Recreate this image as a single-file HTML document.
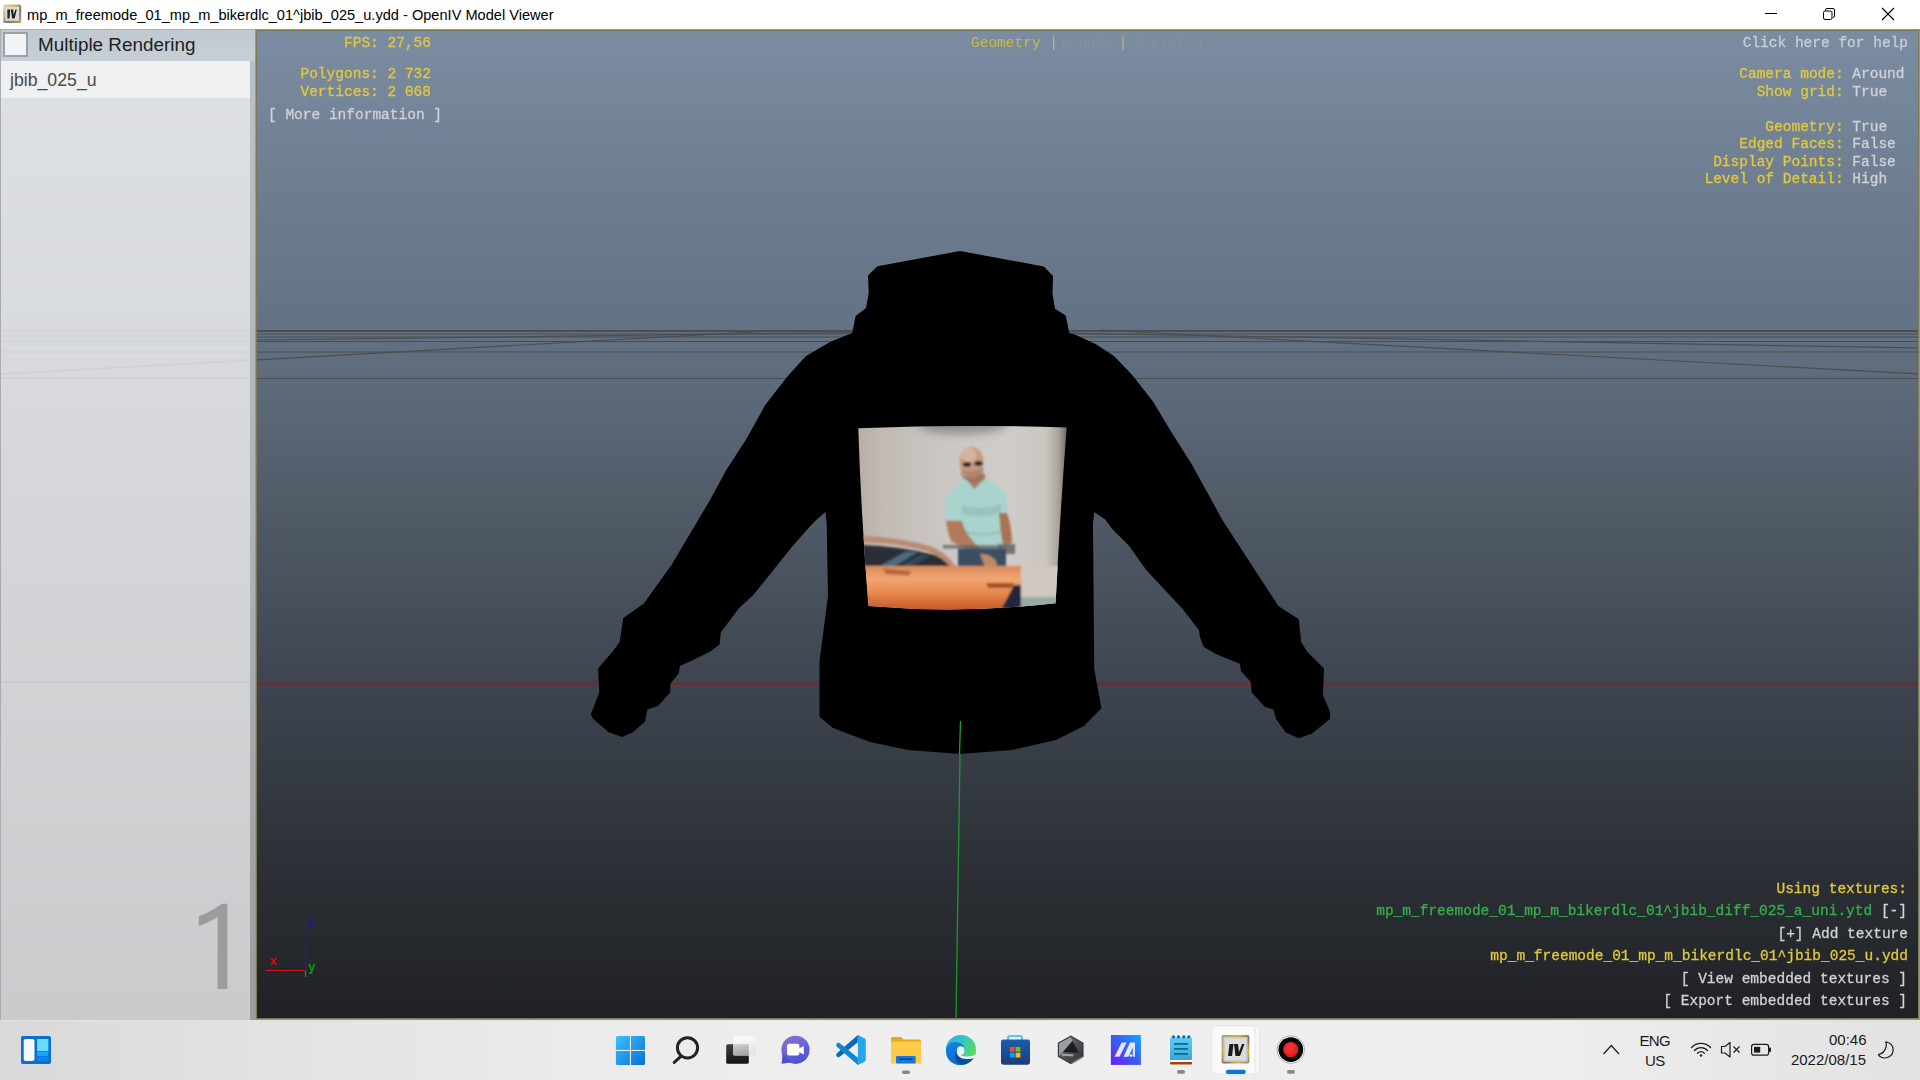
<!DOCTYPE html>
<html><head><meta charset="utf-8">
<style>
*{margin:0;padding:0;box-sizing:border-box}
html,body{width:1920px;height:1080px;overflow:hidden;background:#fff;font-family:"Liberation Sans",sans-serif}
.abs{position:absolute}
#title{left:0;top:0;width:1920px;height:29px;background:#fff}
#title .t{left:27px;top:6.5px;font-size:14.6px;color:#000;white-space:pre;line-height:17px}
#panel{left:0;top:29px;width:255px;height:991px;background:linear-gradient(#dfe2e5,#d6d8db 40%,#cacbcd)}
#hdr{left:0;top:0;width:255px;height:32px;background:linear-gradient(#c0c8d0,#c6ced6)}
#chk{left:3px;top:3px;width:25px;height:25px;border:2px solid #9aa3ad;background:#f1f3f5}
#mr{left:38px;top:5px;font-size:18.9px;color:#1e1e1e;line-height:22px;white-space:pre}
#item{left:1px;top:32px;width:249px;height:37px;background:#eef0f2}
#item span{position:absolute;left:9px;top:8px;font-size:17.7px;color:#4a4a4a;line-height:22px}
#strip{left:250px;top:32px;width:5px;height:959px;background:linear-gradient(#b9c0c7,#aeb2b6 50%,#9c9c9c);z-index:1}
#lborder{left:0;top:0;width:1px;height:991px;background:#a8acb0;z-index:2}
#ptop{left:0;top:0;width:255px;height:1px;background:#a9b1b9;z-index:2}
#big1{left:190px;top:868px;font-size:120px;color:#a3a3a3;line-height:140px}
#vp{left:255px;top:29px;width:1665px;height:991px;border:1px solid #a89f3e;box-shadow:inset 0 0 0 1px #7c7a50;background:linear-gradient(#7b8da3 0%,#6e7d90 16%,#637284 30%,#4f5965 50%,#3e4550 66%,#2c3036 85%,#1f2125 100%)}
#taskbar{left:0;top:1020px;width:1920px;height:60px;background:linear-gradient(90deg,#d9d9d9 0%,#e3e3e3 15%,#ebebeb 30%,#efefef 50%,#eeeeee 80%,#e2e2e2 100%);border-top:1px solid #e2e2e2}
#scene{left:0;top:0}
.mono{font-family:"Liberation Mono",monospace;font-size:14.5px}
.y{fill:#e2c93c;stroke:#e2c93c;stroke-width:0.3px}
.gr{fill:#d0d2d4;stroke:#d0d2d4;stroke-width:0.3px}
.gn{fill:#34b04a;stroke:#34b04a;stroke-width:0.3px}
.tray{font-size:15px;color:#1a1a1a;line-height:18px;white-space:pre}
</style></head><body>
<div id="title" class="abs">
  <svg class="abs" style="left:0;top:0" width="26" height="29" viewBox="0 0 26 29">
    <defs><linearGradient id="icb" x1="0" y1="0" x2="1" y2="1"><stop offset="0" stop-color="#d8d8d8"/><stop offset="0.35" stop-color="#d8b848"/><stop offset="0.6" stop-color="#7a7a7a"/><stop offset="1" stop-color="#c8a848"/></linearGradient></defs>
    <rect x="3.2" y="4.5" width="18" height="18.6" rx="1.5" fill="url(#icb)"/>
    <rect x="5.4" y="6.8" width="13.6" height="14" fill="#dcdcdf"/>
    <path d="M7.4,9.4 L10.2,9.4 L9.6,18.5 L7.4,18.5 Z" fill="#262626"/>
    <path d="M10.8,9.4 L13.2,9.4 L13.6,15 L15.4,9.4 L16.8,9.4 L14.6,18.5 L12.2,18.5 Z" fill="#1e1e1e"/>
  </svg>
  <div class="abs t">mp_m_freemode_01_mp_m_bikerdlc_01^jbib_025_u.ydd - OpenIV Model Viewer</div>
  <svg class="abs" style="left:1750px;top:0" width="170" height="29" viewBox="1750 0 170 29">
    <line x1="1765" y1="13.5" x2="1777" y2="13.5" stroke="#000" stroke-width="1"/>
    <rect x="1823.5" y="11" width="8.5" height="8.5" rx="1.5" fill="none" stroke="#000" stroke-width="1"/>
    <path d="M1825.5,10.5 V10 Q1825.5,8.5 1827,8.5 H1833 Q1834.5,8.5 1834.5,10 V16 Q1834.5,17.5 1833,17.5" fill="none" stroke="#000" stroke-width="1"/>
    <path d="M1882 8 L1894 20 M1894 8 L1882 20" stroke="#000" stroke-width="1.1"/>
  </svg>
</div>
<div id="panel" class="abs">
  <div id="lborder" class="abs"></div>
  <div id="ptop" class="abs"></div>
  <div id="hdr" class="abs"></div>
  <div id="chk" class="abs"></div>
  <div id="mr" class="abs">Multiple Rendering</div>
  <div id="item" class="abs"><span>jbib_025_u</span></div>
  <div id="strip" class="abs"></div>
  
</div>
<div id="vp" class="abs"></div>

<svg id="scene" class="abs" width="1920" height="1080" viewBox="0 0 1920 1080">
  <defs>
    <clipPath id="vpclip"><rect x="257" y="31" width="1661" height="988"/></clipPath>
    <clipPath id="photoclip"><path d="M858.3,428.3 Q962,424 1066.7,427.4 Q1060,515 1055.6,603.3 Q962,614 868.5,606 Q861,515 858.3,428.3 Z"/></clipPath>
    <linearGradient id="pbg" gradientUnits="userSpaceOnUse" x1="858" y1="0" x2="1067" y2="0">
      <stop offset="0" stop-color="#b8aea6"/>
      <stop offset="0.12" stop-color="#c2bab4"/>
      <stop offset="0.4" stop-color="#cac7c3"/>
      <stop offset="0.7" stop-color="#d0cdc9"/>
      <stop offset="0.9" stop-color="#cbc6c0"/>
      <stop offset="0.96" stop-color="#aaa29a"/>
      <stop offset="1" stop-color="#6e645c"/>
    </linearGradient>
    <radialGradient id="pshade" gradientUnits="userSpaceOnUse" cx="962" cy="420" r="50" fx="962" fy="420">
      <stop offset="0" stop-color="#3a3634" stop-opacity="0.7"/>
      <stop offset="1" stop-color="#3a3634" stop-opacity="0"/>
    </radialGradient>
    <linearGradient id="carg" gradientUnits="userSpaceOnUse" x1="0" y1="566" x2="0" y2="610">
      <stop offset="0" stop-color="#d98a5c"/>
      <stop offset="0.3" stop-color="#f2a472"/>
      <stop offset="0.6" stop-color="#e88a4e"/>
      <stop offset="1" stop-color="#c4582a"/>
    </linearGradient>
    <filter id="blur4" x="-50%" y="-100%" width="200%" height="300%"><feGaussianBlur stdDeviation="4"/></filter>
    <filter id="soft" x="-5%" y="-5%" width="110%" height="110%"><feGaussianBlur stdDeviation="0.8"/></filter>
  </defs>
  <g clip-path="url(#vpclip)" fill="none" stroke="#4a4a4a" stroke-width="1.2" opacity="0.9">
    <line x1="255" y1="331" x2="1920" y2="331" stroke-width="2"/>
    <line x1="255" y1="334" x2="1920" y2="334"/>
    <line x1="255" y1="337" x2="1920" y2="337"/>
    <line x1="255" y1="341.5" x2="1920" y2="341.5"/>
    <line x1="255" y1="352" x2="1920" y2="352"/>
    <line x1="255" y1="378.5" x2="1920" y2="378.5"/>
    <line x1="255" y1="360" x2="770" y2="331"/>
    <line x1="1100" y1="330" x2="1920" y2="374"/>
    <line x1="255" y1="340" x2="900" y2="332"/>
    <line x1="1000" y1="332" x2="1920" y2="348"/>
    <line x1="255" y1="683.6" x2="1920" y2="684" stroke="#74282e" stroke-width="2.4"/>
    <line x1="960.5" y1="720" x2="956" y2="1020" stroke="#22a02a" stroke-width="1.3"/>
  </g>
  <path d="M960,251 L1043.75,266.5 L1053,276 L1052.5,293.75 L1055,308.75 L1065.6,315.6 L1069.4,333 L1075.2,334.8 L1095.6,344 L1114,356 L1132.6,375.6 L1153,401.5 L1169.6,429.3 L1191.9,464.4 L1222.4,520 L1278.3,606 L1298.8,619.2 L1301.2,642 L1307.2,651.7 L1324,668.5 L1322.9,695 L1330,711.8 L1330,719 L1312,733.5 L1298.8,738.3 L1285.5,732.3 L1276,719 L1273.5,709.4 L1265,707 L1251.8,692.6 L1250.6,681.8 L1241,671 L1239.8,663.7 L1215.7,654 L1203.7,646.8 L1200,637.2 L1198.9,630 L1182,608.3 L1146,569.8 L1129,545.7 L1112.2,528.9 L1105,519.3 L1094.2,512 L1093,524 L1094.2,668.5 L1101.4,708.2 L1084,726 L1056,740 L1012,750 L960,754 L908,750 L870,742 L833,728 L819.5,716.7 L819.5,661.3 L828,596 L826.7,524 L825.5,512 L817,519.3 L809.9,526.5 L791.8,547 L753.3,595 L738.9,608.3 L720.8,632.4 L719.6,644.4 L710,651.7 L693.1,660 L680,666 L678.7,673.3 L670.3,684 L670.3,692.6 L658.2,705.8 L647.4,709.4 L645,721.5 L633,732.3 L622,737 L608.9,732.3 L593.2,719 L590.8,714.3 L599.3,692.6 L598,668.5 L612.5,651.7 L619.7,642 L623.3,618 L643.8,603.5 L671.5,565 L710,500 L726.3,470 L746.7,438.5 L765.2,405 L787.4,376.5 L806,356 L830,342 L852.2,333 L855.6,316 L866,308 L868.75,292.5 L868,275.6 L877.5,266.25 Z" fill="#000"/>
  <line x1="960.5" y1="721" x2="959.5" y2="754" stroke="#22a02a" stroke-width="1.3"/>

  <!-- photo -->
  <g clip-path="url(#photoclip)">
    <rect x="850" y="420" width="225" height="200" fill="url(#pbg)"/>
    <ellipse cx="962" cy="424" rx="45" ry="10" fill="#4a4644" opacity="0.45" filter="url(#blur4)"/>
    <g filter="url(#soft)">
      <!-- floor right -->
      <rect x="1019" y="566" width="50" height="45" fill="#cfc8c0"/>
      <rect x="1019" y="597" width="50" height="16" fill="#98aaa2"/>
      <!-- neck + head -->
      <path d="M965,474 L985,474 L986,490 L964,490 Z" fill="#a87c62"/>
      <ellipse cx="971.5" cy="462" rx="12" ry="15" fill="#c49a80"/>
      <ellipse cx="969" cy="455" rx="8" ry="7" fill="#d6b298"/>
      <path d="M961,468 Q962,479 972,480 Q982,479 983.5,467 L983,474 Q979,482 972,482 Q964,482 961,474 Z" fill="#8e6a56" opacity="0.8"/>
      <path d="M962,469 Q971,474 983,467 L983,473 Q972,480 963,474 Z" fill="#a57a62" opacity="0.6"/>
      <ellipse cx="967" cy="464.5" rx="4.2" ry="2.4" fill="#2e2826"/>
      <ellipse cx="978.5" cy="463.5" rx="4.2" ry="2.4" fill="#2e2826"/>
      <!-- shirt -->
      <path d="M966,479 L974,489 L986,478 Q998,486 1005,492 Q1008,502 1007,513 L1001,514 L1004,550 L961,550 L962,521 L945.5,520.5 Q944,506 946,497 Q956,486 966,479 Z" fill="#a9d3cd"/>
      <path d="M962,505 Q982,512 1001,503 L1001,512 Q982,520 962,514 Z" fill="#8fb6b2" opacity="0.55"/>
      <path d="M963,530 Q982,536 1002,530 L1002,533 Q982,539 963,533 Z" fill="#8fb6b2" opacity="0.5"/>
      <!-- arms -->
      <path d="M946,520.5 L962,521 Q964,531 973,541 L982,550 L988,558 L996,568 L986,570 L979,554 Q962,548 951,541 Q947,531 946,520.5 Z" fill="#b27a5a"/>
      <path d="M999,513 L1007,513 Q1012,528 1012,543 L1003,545 Q1000,530 999,513 Z" fill="#a87255"/>
      <!-- dark bar -->
      <rect x="943" y="545" width="58" height="3.5" fill="#5e6266" opacity="0.75"/>
      <rect x="998" y="544" width="17" height="10" fill="#606466" opacity="0.85"/>
      <!-- jeans -->
      <path d="M958,548.5 L1006,548.5 L1006,567 L958,567 Z" fill="#3c4e64"/>
      <!-- hand -->
      <path d="M980,554 Q990,553 996,561 L998,570 L986,570 Z" fill="#bb8a6c"/>
      <!-- car roof/window -->
      <path d="M860,545 Q900,546 935,555 Q948,560 952,567 L860,567 Z" fill="#2a2f36"/>
      <path d="M880,566 L905,552 L918,552 L895,566 Z" fill="#5a86a2" opacity="0.7"/>
      <path d="M900,566 L922,554 L930,556 L912,566 Z" fill="#3a5a72" opacity="0.6"/>
      <path d="M860,536 Q900,537 933,547 Q950,556 956,567 L950,567 Q945,559 929,552 Q895,542 860,542 Z" fill="#b88c72"/>
      <!-- car body -->
      <path d="M860,566 L1021,566 L1021,615 L860,615 Z" fill="url(#carg)"/>
      <path d="M1014,585 L1000,612 L1021,612 L1021,585 Z" fill="#22283a"/>
      <path d="M986,583 L1014,583 L1012,588 L988,588 Z" fill="#a85028"/>
      <path d="M883,568.5 L911,571 L909,575.5 L886,574 Z" fill="#a85a34" opacity="0.8"/>
    </g>
  </g>

  <path d="M217.6,989 L227.3,989 L227.3,903.7 L222,903.7 Q212,911 198.7,916.5 L198.7,926.2 Q210,922 217.6,917 Z" fill="#9c9c9c"/>
  <g opacity="0.06" stroke="#5a5048" stroke-width="1.5" fill="none">
    <line x1="0" y1="331" x2="255" y2="331"/><line x1="0" y1="336" x2="255" y2="336"/><line x1="0" y1="341" x2="255" y2="341"/><line x1="0" y1="352" x2="255" y2="352"/><line x1="0" y1="378" x2="255" y2="378"/><line x1="0" y1="374" x2="255" y2="360"/>
    <line x1="0" y1="682" x2="255" y2="682" stroke="#c03030"/>
  </g>
  <!-- axis gizmo -->
  <g>
    <line x1="266" y1="970.5" x2="305" y2="970.5" stroke="#d01818" stroke-width="1.2"/>
    <line x1="305.5" y1="932" x2="305.5" y2="971" stroke="#1818d8" stroke-width="1.2"/>
    <line x1="305.5" y1="971" x2="305.5" y2="977" stroke="#18a018" stroke-width="1.2"/>
    <text x="270.2" y="965" font-family="Liberation Sans" font-weight="bold" font-size="12.5" fill="#d01212">x</text>
    <text x="308.3" y="926.4" font-family="Liberation Sans" font-weight="bold" font-size="12.5" fill="#1212d0">z</text>
    <text x="308.3" y="971" font-family="Liberation Sans" font-weight="bold" font-size="12.5" fill="#12a012">y</text>
  </g>

  <!-- viewport texts -->
  <g class="mono">
    <text x="431" y="47" text-anchor="end" class="y">FPS: 27,56</text>
    <text x="431" y="78" text-anchor="end" class="y">Polygons: 2 732</text>
    <text x="431" y="95.6" text-anchor="end" class="y">Vertices: 2 068</text>
    <text x="268" y="119" class="gr">[ More information ]</text>
    <text x="971" y="47" fill="#cbb943">Geometry</text>
    <text x="1053.5" y="47" text-anchor="middle" fill="#cbb943">|</text>
    <text x="1061" y="47" fill="#87909a">Bounds</text>
    <text x="1123" y="47" text-anchor="middle" fill="#cbb943">|</text>
    <text x="1133" y="47" fill="#87909a">Skeleton</text>
    <text x="1908" y="47" text-anchor="end" fill="#c9ced4" stroke="#c9ced4" stroke-width="0.3">Click here for help</text>
    <text x="1843.7" y="78.3" text-anchor="end" class="y">Camera mode:</text>
    <text x="1852.3" y="78.3" class="gr">Around</text>
    <text x="1843.7" y="95.8" text-anchor="end" class="y">Show grid:</text>
    <text x="1852.3" y="95.8" class="gr">True</text>
    <text x="1843.7" y="131" text-anchor="end" class="y">Geometry:</text>
    <text x="1852.3" y="131" class="gr">True</text>
    <text x="1843.7" y="148.2" text-anchor="end" class="y">Edged Faces:</text>
    <text x="1852.3" y="148.2" class="gr">False</text>
    <text x="1843.7" y="165.7" text-anchor="end" class="y">Display Points:</text>
    <text x="1852.3" y="165.7" class="gr">False</text>
    <text x="1843.7" y="183" text-anchor="end" class="y">Level of Detail:</text>
    <text x="1852.3" y="183" class="gr">High</text>

    <text x="1907" y="893" text-anchor="end" class="y">Using textures:</text>
    <text x="1907" y="915" text-anchor="end"><tspan class="gn">mp_m_freemode_01_mp_m_bikerdlc_01^jbib_diff_025_a_uni.ytd</tspan><tspan class="gr"> [-]</tspan></text>
    <text x="1908" y="938" text-anchor="end" class="gr">[+] Add texture</text>
    <text x="1908" y="960" text-anchor="end" class="y">mp_m_freemode_01_mp_m_bikerdlc_01^jbib_025_u.ydd</text>
    <text x="1907" y="982.5" text-anchor="end" class="gr">[ View embedded textures ]</text>
    <text x="1907" y="1005" text-anchor="end" class="gr">[ Export embedded textures ]</text>
  </g>
</svg>

<div id="taskbar" class="abs"></div>
<svg class="abs" style="left:0;top:1020px" width="1920" height="60" viewBox="0 1020 1920 60">
  <defs>
    <linearGradient id="winb" gradientUnits="userSpaceOnUse" x1="616" y1="1036" x2="645" y2="1065"><stop offset="0" stop-color="#3cc0fa"/><stop offset="1" stop-color="#0870d8"/></linearGradient>
    <linearGradient id="chatg" x1="0.2" y1="0" x2="0.6" y2="1"><stop offset="0" stop-color="#8a6ccc"/><stop offset="0.4" stop-color="#7068d8"/><stop offset="1" stop-color="#4a50d4"/></linearGradient>
    <linearGradient id="vsg" x1="0" y1="0" x2="1" y2="0"><stop offset="0" stop-color="#0a6ab8"/><stop offset="1" stop-color="#1ea0ec"/></linearGradient>
    <linearGradient id="edg1" x1="0" y1="0.1" x2="1" y2="0.6"><stop offset="0" stop-color="#24b0f0"/><stop offset="0.5" stop-color="#36c4c0"/><stop offset="1" stop-color="#5ee050"/></linearGradient>
    <linearGradient id="edg2" x1="0" y1="0" x2="0.3" y2="1"><stop offset="0" stop-color="#1482dc"/><stop offset="1" stop-color="#0a6ad0"/></linearGradient>
    <linearGradient id="storeg" x1="0" y1="0" x2="0" y2="1"><stop offset="0" stop-color="#1a5eb0"/><stop offset="1" stop-color="#203a78"/></linearGradient>
    <linearGradient id="iag" x1="1" y1="0" x2="0" y2="1"><stop offset="0" stop-color="#0aa8ff"/><stop offset="0.5" stop-color="#3a5cf4"/><stop offset="1" stop-color="#6a1cf0"/></linearGradient>
    <linearGradient id="npg" x1="0" y1="0" x2="0" y2="1"><stop offset="0" stop-color="#60ccf2"/><stop offset="1" stop-color="#3aa6d8"/></linearGradient>
    <linearGradient id="hexg" x1="0" y1="0" x2="1" y2="1"><stop offset="0" stop-color="#7a8088"/><stop offset="0.5" stop-color="#50545a"/><stop offset="1" stop-color="#2e3034"/></linearGradient>
    <linearGradient id="ivb" x1="0" y1="0" x2="1" y2="1"><stop offset="0" stop-color="#9a9a9a"/><stop offset="0.3" stop-color="#d8b030"/><stop offset="0.55" stop-color="#707070"/><stop offset="0.8" stop-color="#e0b830"/><stop offset="1" stop-color="#8a8a8a"/></linearGradient>
    <linearGradient id="tvd" x1="0" y1="0" x2="0" y2="1"><stop offset="0" stop-color="#404040"/><stop offset="1" stop-color="#111"/></linearGradient>
    <linearGradient id="tvl" x1="0" y1="0" x2="0.3" y2="1"><stop offset="0" stop-color="#ffffff"/><stop offset="1" stop-color="#e4e4e4"/></linearGradient>
    <linearGradient id="tvo" x1="0" y1="0" x2="0.3" y2="1"><stop offset="0" stop-color="#d0d0d0"/><stop offset="1" stop-color="#a8a8a8"/></linearGradient>
    <radialGradient id="redg" cx="0.45" cy="0.4" r="0.6"><stop offset="0" stop-color="#ff3a3a"/><stop offset="1" stop-color="#d81a1a"/></radialGradient>
  </defs>
  <!-- widgets -->
  <rect x="21" y="1036" width="30" height="28" rx="1.8" fill="#0b6fd0"/>
  <rect x="23.7" y="1039" width="10.8" height="22" rx="2" fill="#f8f8f8"/>
  <rect x="37.1" y="1039" width="11.3" height="12" fill="#6adcff"/>
  <rect x="37.1" y="1051.6" width="11.3" height="4.3" fill="#1aa8f8"/>
  <rect x="37.1" y="1056.6" width="11.3" height="4.5" fill="#0a86e6"/>
  <!-- start -->
  <rect x="615.9" y="1035.9" width="29.1" height="29.1" rx="1.6" fill="url(#winb)"/>
  <rect x="629.9" y="1035" width="1.1" height="31" fill="#eeeeee"/>
  <rect x="615" y="1049.9" width="31" height="1.1" fill="#eeeeee"/>
  <!-- search -->
  <circle cx="687.5" cy="1047.8" r="10.1" fill="none" stroke="#222" stroke-width="3"/>
  <line x1="680.6" y1="1056.6" x2="674.3" y2="1062.4" stroke="#222" stroke-width="3" stroke-linecap="round"/>
  <!-- task view -->
  <rect x="726.2" y="1044.2" width="22.6" height="19.6" rx="1.6" fill="url(#tvd)"/>
  <rect x="733.3" y="1036.2" width="22.5" height="19.2" rx="1.4" fill="url(#tvl)"/>
  <rect x="733.3" y="1044.2" width="15.5" height="11.2" fill="url(#tvo)"/>
  <!-- chat -->
  <circle cx="795.5" cy="1049.8" r="14.1" fill="url(#chatg)"/>
  <path d="M781.6,1063.8 L782.6,1053.5 L791,1062.5 Z" fill="#4e4ed4"/>
  <rect x="787" y="1043.8" width="12.4" height="11.6" rx="2" fill="#fff"/>
  <path d="M799,1048.5 L803.8,1046 L803.8,1054.6 L799,1052 Z" fill="#fff"/>
  <!-- vscode -->
  <path d="M857.9,1035 L857.9,1042.3 L839.8,1056.8 Q837.5,1058 836.3,1055.8 Q835.8,1054 837.2,1053 Z" fill="#0b6bb6"/>
  <path d="M857.9,1065 L857.9,1057.7 L839.8,1043.2 Q837.5,1042 836.3,1044.2 Q835.8,1046 837.2,1047 Z" fill="#0e86d2"/>
  <path d="M857.9,1035 L864.5,1038.2 Q865.8,1039 865.8,1040.5 L865.8,1059.5 Q865.8,1061 864.5,1061.8 L857.9,1065 Z" fill="#22a6ee"/>
  <!-- explorer -->
  <path d="M891,1038.5 Q891,1037 892.5,1037 L901,1037 L903.5,1039.5 L919.5,1039.5 Q921,1039.5 921,1041 L921,1063.2 L891,1063.2 Z" fill="#e8a818"/>
  <rect x="891" y="1041.5" width="30" height="21.7" rx="1" fill="#fccc48"/>
  <rect x="896" y="1056" width="19.7" height="7.5" rx="1.2" fill="#1a78d8"/>
  <rect x="899" y="1058.5" width="13.5" height="1.4" fill="#0a3a80"/>
  <rect x="902" y="1070.5" width="8" height="3.4" rx="1.7" fill="#888"/>
  <!-- edge -->
  <circle cx="961" cy="1050" r="15.1" fill="url(#edg1)"/>
  <path d="M945.9,1050 Q947,1042 956,1042 Q962,1042.5 964.5,1047 L958,1048 Q955,1052 959,1056 Q964,1059 972,1057.5 Q974,1057 973.5,1058.3 Q968,1065.2 959,1065.1 Q946,1063 945.9,1050 Z" fill="url(#edg2)"/>
  <path d="M955.5,1052 Q954,1060 960,1064.6 Q968,1065.5 973.8,1058 Q965,1060.5 960,1057.5 Q956.5,1055 955.5,1052 Z" fill="#0e4c9e"/>
  <ellipse cx="960.6" cy="1050.6" rx="3.7" ry="4.4" fill="#efefef"/>
  <path d="M957.5,1052 Q961,1056.5 966,1056.6 Q972,1056.8 976.6,1054.2 L977,1057 L973.8,1058.2 Q966,1060 961,1058 Q957,1055.5 956.8,1052 Z" fill="#efefef"/>
  <!-- store -->
  <path d="M1008,1041 L1008,1037.5 Q1008,1036 1009.5,1036 L1020.5,1036 Q1022,1036 1022,1037.5 L1022,1041" fill="none" stroke="#3ab4f2" stroke-width="1.6"/>
  <path d="M1001,1041.5 Q1001,1039.6 1003,1039.6 L1028,1039.6 Q1030,1039.6 1030,1041.5 L1030,1062 Q1030,1064.7 1027,1064.7 L1004,1064.7 Q1001,1064.7 1001,1062 Z" fill="url(#storeg)"/>
  <rect x="1009.8" y="1046.9" width="4.8" height="4.8" fill="#f25022"/>
  <rect x="1015.6" y="1046.9" width="4.8" height="4.8" fill="#7fba00"/>
  <rect x="1009.8" y="1052.7" width="4.8" height="4.8" fill="#00a4ef"/>
  <rect x="1015.6" y="1052.7" width="4.8" height="4.8" fill="#ffb900"/>
  <!-- hex app -->
  <path d="M1070.8,1035.6 L1083.6,1042.8 L1083.6,1056.8 L1070.8,1064.2 L1057.8,1056.8 L1057.8,1042.8 Z" fill="#3a3d42"/>
  <path d="M1070.8,1037 L1082.3,1043.5 L1082.3,1056 L1070.8,1062.8 L1059.1,1056 L1059.1,1043.5 Z" fill="url(#hexg)"/>
  <path d="M1070.8,1037 L1059.1,1043.5 L1059.1,1056 L1063,1052 L1072.4,1041 Z" fill="#a8b0b8" opacity="0.75"/>
  <path d="M1072.4,1041 L1063,1052 L1079.2,1052.9 Z" fill="#1c1e22"/>
  <path d="M1062,1053.8 L1073.4,1054.6 L1073,1056.6 L1061.5,1055.5 Z" fill="#b8c0c8" opacity="0.8"/>
  <path d="M1070.8,1062.8 L1082.3,1056 L1083,1058 L1073,1064 Z" fill="#8a8e94" opacity="0.5"/>
  <!-- //A app -->
  <rect x="1110.9" y="1035" width="30" height="29.9" fill="url(#iag)"/>
  <path d="M1114.5,1056.8 L1119.5,1056.8 L1126.6,1042.5 L1121.6,1042.5 Z" fill="#e6e2ff"/>
  <path d="M1123.5,1056.8 L1128.5,1056.8 L1135,1042.5 L1130,1042.5 Z" fill="#e6e8ff"/>
  <path d="M1132.8,1044 L1135,1042.5 L1135,1056.8 L1132.8,1056.8 Z" fill="#e0e8ff"/>
  <circle cx="1131" cy="1055.5" r="1.3" fill="#fff"/>
  <!-- notepad -->
  <rect x="1170" y="1061.8" width="22" height="2.6" rx="1" fill="#a04408"/>
  <rect x="1170" y="1060" width="22" height="1.8" fill="#ffffff"/>
  <rect x="1170" y="1037.2" width="22" height="22.8" rx="1.5" fill="url(#npg)"/>
  <circle cx="1173.5" cy="1036.8" r="1.6" fill="#0a6a9a"/><circle cx="1178.5" cy="1036.8" r="1.6" fill="#0a6a9a"/><circle cx="1183.8" cy="1036.8" r="1.6" fill="#0a6a9a"/><circle cx="1188.8" cy="1036.8" r="1.6" fill="#0a6a9a"/>
  <rect x="1174" y="1043" width="14" height="1.8" fill="#0a6a9a"/>
  <rect x="1174" y="1048" width="14" height="1.8" fill="#0a6a9a"/>
  <rect x="1174" y="1053" width="14" height="1.8" fill="#0a6a9a"/>
  <rect x="1177" y="1070" width="8" height="3.7" rx="1.8" fill="#888"/>
  <!-- openiv active -->
  <rect x="1216" y="1026" width="43.6" height="48.2" rx="4" fill="#f6f6f6" stroke="#e4e4e4" stroke-width="0.8"/>
  <rect x="1211.7" y="1025.8" width="43.3" height="48.4" rx="4" fill="#fafafa" stroke="#e2e2e2" stroke-width="0.8"/>
  <rect x="1222.5" y="1036" width="26" height="26.6" rx="1" fill="#c9c9cc" stroke="url(#ivb)" stroke-width="1.8"/>
  <rect x="1225" y="1038.5" width="21" height="21.6" fill="#dcdcdc"/>
  <path d="M1229.5,1044 L1233.5,1044 L1232,1056 L1228,1056 Z" fill="#1a1a1a"/>
  <path d="M1234,1044 L1238,1044 L1239,1052 L1242,1044 L1244.5,1044 L1240,1056 L1235.5,1056 Z" fill="#1a1a1a"/>
  <rect x="1225.8" y="1069.8" width="20" height="4.2" rx="2.1" fill="#0a74d8"/>
  <!-- record -->
  <circle cx="1290.8" cy="1049.6" r="13.8" fill="#fff" stroke="#9a9a9a" stroke-width="0.8"/>
  <circle cx="1290.8" cy="1049.6" r="12.4" fill="#050505"/>
  <circle cx="1290.8" cy="1049.6" r="7.6" fill="url(#redg)"/>
  <rect x="1287" y="1070" width="8" height="3.7" rx="1.8" fill="#888"/>
  <!-- tray -->
  <path d="M1603.5,1054 L1611.3,1045.5 L1619,1054" fill="none" stroke="#1a1a1a" stroke-width="1.2"/>
  <g fill="none" stroke="#1a1a1a" stroke-width="1.3" stroke-linecap="round">
    <path d="M1691.5,1047.5 A13,13 0 0 1 1710.5,1047.5"/>
    <path d="M1694.5,1050.5 A8.8,8.8 0 0 1 1707.5,1050.5"/>
    <path d="M1697.5,1053.3 A4.6,4.6 0 0 1 1704.5,1053.3"/>
  </g>
  <circle cx="1701" cy="1055.5" r="1.2" fill="#1a1a1a"/>
  <path d="M1721.5,1046.5 L1725,1046.5 L1730,1042.5 L1730,1057 L1725,1053 L1721.5,1053 Z" fill="none" stroke="#1a1a1a" stroke-width="1.2" stroke-linejoin="round"/>
  <path d="M1733.5,1046.5 L1739.5,1052.5 M1739.5,1046.5 L1733.5,1052.5" stroke="#1a1a1a" stroke-width="1.1"/>
  <rect x="1751.6" y="1044.3" width="17" height="10.8" rx="2.2" fill="none" stroke="#1a1a1a" stroke-width="1.2"/>
  <rect x="1754" y="1046.8" width="6.2" height="5.8" fill="#1a1a1a"/>
  <rect x="1769" y="1047.5" width="2" height="4.5" rx="0.8" fill="#1a1a1a"/>
  <path d="M1885.8,1041.8 Q1893.2,1043.5 1893.2,1050 Q1892.6,1057.6 1884.7,1058 Q1880,1058 1878.4,1054.6 Q1884.2,1053.2 1886,1047.5 Q1886.6,1044.5 1885.8,1041.8 Z" fill="none" stroke="#1a1a1a" stroke-width="1.15" stroke-linejoin="round"/>
</svg>
<div class="abs tray" style="left:1639.5px;top:1032px;letter-spacing:-0.7px">ENG</div>
<div class="abs tray" style="left:1645px;top:1052.3px;letter-spacing:-0.6px">US</div>
<div class="abs tray" style="left:1829px;top:1031px;text-align:right;width:37px">00:46</div>
<div class="abs tray" style="left:1790px;top:1051px;text-align:right;width:76px">2022/08/15</div>
</body></html>
